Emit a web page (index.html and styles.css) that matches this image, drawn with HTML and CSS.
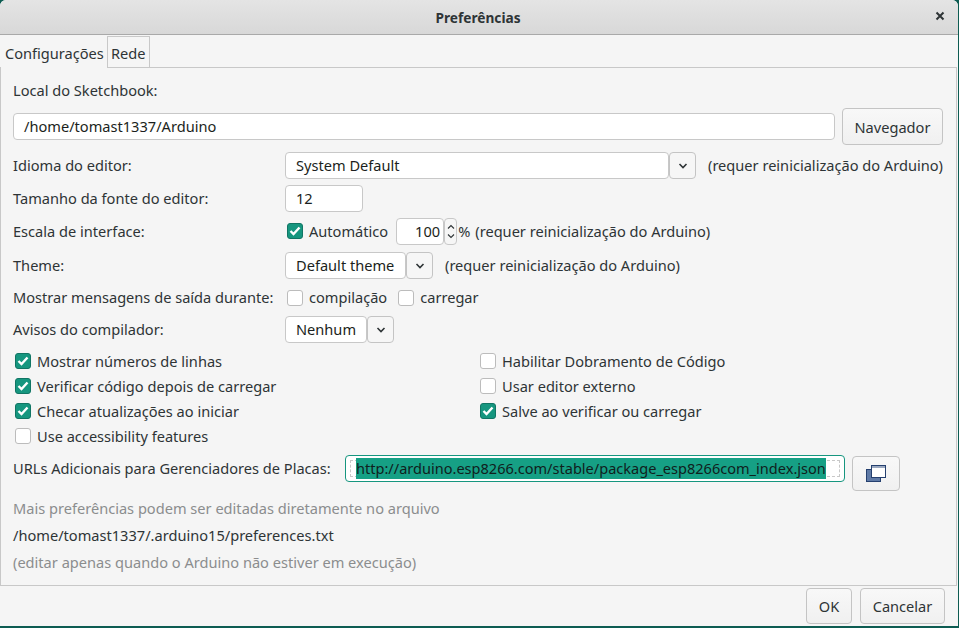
FILE: index.html
```html
<!DOCTYPE html>
<html>
<head>
    <title>Preferências</title>
    <link rel="stylesheet" href="styles.css">
</head>
<body>
    <div id="dialog">
        <div id="titlebar">
            <span class="title">Preferências</span>
            <svg class="close" width="10" height="10" viewBox="0 0 10 10"><path d="M1.5 1.5l7 7M8.5 1.5l-7 7" stroke="#2e3436" stroke-width="2" fill="none"/></svg>
        </div>
        <div id="tabs">
            <div class="tab active">Configurações</div>
            <div class="tab">Rede</div>
        </div>
        <div id="panel">
            <div class="row-sketch-label">Local do Sketchbook:</div>
            <div class="row-sketch">
                <div class="field path">/home/tomast1337/Arduino</div>
                <div class="btn browse">Navegador</div>
            </div>
            <div class="row row-lang">
                <label>Idioma do editor:</label>
                <div class="field combo lang">System Default</div>
                <div class="drop"><svg width="10" height="6" viewBox="0 0 10 6"><path d="M1.5 1l3.5 3.5L8.5 1" stroke="#2e3436" stroke-width="1.6" fill="none"/></svg></div>
                <span class="note first">(requer reinicialização do Arduino)</span>
            </div>
            <div class="row">
                <label>Tamanho da fonte do editor:</label>
                <div class="field size">12</div>
            </div>
            <div class="row">
                <label>Escala de interface:</label>
                <span class="check on"><svg width="12" height="10" viewBox="0 0 12 10"><path d="M1.5 5l3 3 6-6.5" stroke="#fff" stroke-width="2.4" fill="none"/></svg></span>
                <span class="opt">Automático</span>
                <div class="field scale">100</div>
                <div class="spin">
                    <svg width="8" height="6" viewBox="0 0 8 6"><path d="M1 4.5l3-3 3 3" stroke="#2e3436" stroke-width="1.1" fill="none"/></svg>
                    <svg width="8" height="6" viewBox="0 0 8 6"><path d="M1 1.5l3 3 3-3" stroke="#2e3436" stroke-width="1.1" fill="none"/></svg>
                </div>
                <span class="note pct">%</span>
                <span class="note restart">(requer reinicialização do Arduino)</span>
            </div>
            <div class="row row-theme">
                <label>Theme:</label>
                <div class="field combo theme">Default theme</div>
                <div class="drop"><svg width="10" height="6" viewBox="0 0 10 6"><path d="M1.5 1l3.5 3.5L8.5 1" stroke="#2e3436" stroke-width="1.6" fill="none"/></svg></div>
                <span class="note first">(requer reinicialização do Arduino)</span>
            </div>
            <div class="row row-output">
                <label>Mostrar mensagens de saída durante:</label>
                <span class="check"></span>
                <span class="opt">compilação</span>
                <span class="check second"></span>
                <span class="opt">carregar</span>
            </div>
            <div class="row row-warn">
                <label>Avisos do compilador:</label>
                <div class="field combo warn">Nenhum</div>
                <div class="drop"><svg width="10" height="6" viewBox="0 0 10 6"><path d="M1.5 1l3.5 3.5L8.5 1" stroke="#2e3436" stroke-width="1.6" fill="none"/></svg></div>
            </div>
            <div class="options">
                <div class="opt-item"><span class="check on"><svg width="12" height="10" viewBox="0 0 12 10"><path d="M1.5 5l3 3 6-6.5" stroke="#fff" stroke-width="2.4" fill="none"/></svg></span><span class="opt">Mostrar números de linhas</span></div>
                <div class="opt-item"><span class="check"></span><span class="opt">Habilitar Dobramento de Código</span></div>
                <div class="opt-item"><span class="check on"><svg width="12" height="10" viewBox="0 0 12 10"><path d="M1.5 5l3 3 6-6.5" stroke="#fff" stroke-width="2.4" fill="none"/></svg></span><span class="opt">Verificar código depois de carregar</span></div>
                <div class="opt-item"><span class="check"></span><span class="opt">Usar editor externo</span></div>
                <div class="opt-item"><span class="check on"><svg width="12" height="10" viewBox="0 0 12 10"><path d="M1.5 5l3 3 6-6.5" stroke="#fff" stroke-width="2.4" fill="none"/></svg></span><span class="opt">Checar atualizações ao iniciar</span></div>
                <div class="opt-item"><span class="check on"><svg width="12" height="10" viewBox="0 0 12 10"><path d="M1.5 5l3 3 6-6.5" stroke="#fff" stroke-width="2.4" fill="none"/></svg></span><span class="opt">Salve ao verificar ou carregar</span></div>
                <div class="opt-item"><span class="check"></span><span class="opt">Use accessibility features</span></div>
            </div>
            <div class="row-urls">
                <span class="urls-label">URLs Adicionais para Gerenciadores de Placas:</span>
                <div class="urls-field"><div class="urls-inner"><span class="selected">http://arduino.esp8266.com/stable/package_esp8266com_index.json</span></div></div>
                <div class="btn urls-btn">
                    <svg width="20" height="17" viewBox="0 0 20 17">
                        <rect x="0.5" y="4.5" width="14" height="12" fill="#5f7aa6" stroke="#25406f"/>
                        <rect x="5.5" y="0.5" width="14" height="12" fill="#fff" stroke="#25406f"/>
                        <rect x="6" y="1" width="13" height="2" fill="#9aa8c0"/>
                    </svg>
                </div>
            </div>
            <div class="hint more">Mais preferências podem ser editadas diretamente no arquivo</div>
            <div class="file">/home/tomast1337/.arduino15/preferences.txt</div>
            <div class="hint only">(editar apenas quando o Arduino não estiver em execução)</div>
        </div>
        <div id="footer">
            <div class="btn ok">OK</div>
            <div class="btn cancel">Cancelar</div>
        </div>
    </div>
</body>
</html>
```

FILE: styles.css
```css
html, body {
  margin: 0;
  height: 100%;
  background-color: #0d5c52;
  overflow: hidden;
}

body {
  font-family: "Noto Sans", sans-serif;
  font-size: 14.6px;
  color: #2e3436;
}

#dialog {
  width: 958px;
  height: 626px;
  background-color: #f5f5f5;
  border-radius: 6px 6px 0 0;
  display: flex;
  flex-direction: column;
  overflow: hidden;
}

#titlebar {
  height: 34px;
  flex: none;
  box-sizing: content-box;
  padding-right: 2px;
  background: linear-gradient(#e4e4e4, #d8d8d8);
  border-bottom: 1px solid #a9a9a9;
  display: flex;
  align-items: center;
  justify-content: center;
  position: relative;
}

.title {
  font-weight: 700;
  font-size: 13.7px;
}

.close {
  position: absolute;
  right: 13px;
  top: 11px;
}

#tabs {
  height: 32px;
  flex: none;
  display: flex;
  align-items: flex-end;
  padding-left: 1px;
}

.tab {
  height: 31px;
  line-height: 33px;
  padding: 0 3px 0 3px;
  border: 1px solid #c8c8c8;
  border-bottom: none;
  box-sizing: border-box;
}

.tab.active {
  border: none;
  height: 32px;
  line-height: 34px;
  position: relative;
  top: 1px;
  z-index: 1;
  background-color: #f5f5f5;
  width: 106px;
  padding: 0 0 0 4px;
}

#panel {
  flex: 1;
  box-sizing: border-box;
  border: 1px solid #c8c8c8;
  margin-right: 1px;
  padding: 12px 12px 0;
  display: flex;
  flex-direction: column;
}

.row-sketch-label {
  height: 20px;
  line-height: 21px;
}

.row-sketch {
  display: flex;
  align-items: center;
  gap: 7px;
  margin-top: 8px;
  height: 37px;
}

.field {
  height: 27px;
  box-sizing: border-box;
  background-color: #fff;
  border: 1px solid #c8c8c8;
  border-radius: 4px;
  line-height: 25px;
  padding: 0 10px;
  color: #1b1f20;
}

.path {
  width: 822px;
}

.btn {
  box-sizing: border-box;
  background: linear-gradient(#f8f8f8, #f0f0f0);
  border: 1px solid #c4c4c4;
  border-radius: 4px;
  display: flex;
  align-items: center;
  justify-content: center;
}

.browse {
  width: 101px;
  height: 37px;
}

.row {
  display: flex;
  align-items: center;
  height: 27px;
  margin-top: 6px;
}

.row-lang {
  margin-top: 7px;
}

.row-theme {
  margin-top: 7px;
}

.row label {
  width: 272px;
  flex: none;
}

.row label, .row .note, .row .opt {
  margin-bottom: 2px;
}

.row .check.on {
  margin-bottom: 1px;
}

.lang {
  width: 384px;
}

.size {
  width: 78px;
}

.theme {
  width: 121px;
}

.warn {
  width: 82px;
}

.drop {
  width: 27px;
  height: 27px;
  box-sizing: border-box;
  background: #f6f6f6;
  border: 1px solid #c4c4c4;
  border-radius: 4px;
  display: flex;
  align-items: center;
  justify-content: center;
}

.note.first {
  margin-left: 12px;
}

.check {
  width: 16px;
  height: 16px;
  box-sizing: border-box;
  flex: none;
  margin-left: 2px;
  background-color: #fff;
  border: 1px solid #bcbcbc;
  border-radius: 3px;
  display: inline-flex;
  align-items: center;
  justify-content: center;
}

.check.on {
  background-color: #16967f;
  border-color: #117564;
}

.check.second {
  margin-left: 11px;
}

.opt {
  margin-left: 6px;
}

.scale {
  width: 48px;
  margin-left: 8px;
  padding: 0 3px 0 0;
  text-align: right;
}

.spin {
  width: 13px;
  height: 27px;
  box-sizing: border-box;
  background: #f6f6f6;
  border: 1px solid #c8c8c8;
  border-radius: 4px;
  display: flex;
  flex-direction: column;
  align-items: center;
  justify-content: center;
  gap: 3px;
}

.note.pct {
  margin-left: 1px;
}

.note.restart {
  margin-left: 5px;
}

.row-output {
  margin-top: 5px;
}

.row-warn {
  margin-top: 5px;
}

.options {
  display: grid;
  grid-template-columns: 465px 1fr;
  grid-auto-rows: 25px;
  margin-top: 5px;
}

.opt-item {
  display: flex;
  align-items: center;
  padding-top: 1px;
  box-sizing: border-box;
}

.row-urls {
  display: flex;
  align-items: flex-start;
  height: 36px;
  margin-top: 7px;
}

.urls-label {
  width: 332px;
  flex: none;
  line-height: 27px;
}

.urls-field {
  width: 500px;
  height: 27px;
  box-sizing: border-box;
  background-color: #fff;
  border: 1px solid #16967f;
  border-radius: 4px;
  padding: 4px;
}

.urls-inner {
  height: 17px;
  border: 1px dashed #c8c8c8;
  box-sizing: border-box;
  padding-left: 5px;
  white-space: nowrap;
}

.selected {
  display: inline-block;
  background-color: #16a085;
  color: #10201d;
  font-size: 14.55px;
  height: 21px;
  line-height: 21px;
  margin-top: -3px;
  vertical-align: top;
}

.urls-btn {
  width: 48px;
  height: 35px;
  margin-left: 7px;
  margin-top: 1px;
}

.hint {
  color: #8b8d8e;
}

.more {
  margin-top: 4px;
  height: 27px;
  line-height: 27px;
}

.file {
  height: 27px;
  line-height: 27px;
}

.only {
  height: 27px;
  line-height: 27px;
}

#footer {
  height: 40px;
  flex: none;
  display: flex;
  justify-content: flex-end;
  gap: 8px;
  padding: 2px 13px 0 0;
  box-sizing: border-box;
}

#footer .btn {
  height: 36px;
}

.ok {
  width: 46px;
}

.cancel {
  width: 85px;
}
```
